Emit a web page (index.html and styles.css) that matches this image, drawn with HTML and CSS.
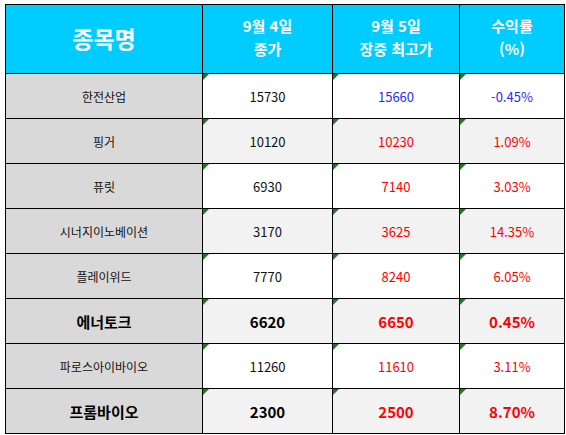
FILE: index.html
```html
<!DOCTYPE html>
<html lang="ko">
<head>
<meta charset="utf-8">
<link rel="stylesheet" href="styles.css">
</head>
<body>
<div class="sheet">
  <div class="cell head name">종목명</div>
  <div class="cell head">9월 4일<br>종가</div>
  <div class="cell head">9월 5일<br>장중 최고가</div>
  <div class="cell head">수익률<br>(%)</div>

  <div class="cell label">한전산업</div>
  <div class="cell num mark">15730</div>
  <div class="cell num mark blue">15660</div>
  <div class="cell num mark blue">-0.45%</div>

  <div class="cell label">핑거</div>
  <div class="cell num mark alt">10120</div>
  <div class="cell num mark alt red">10230</div>
  <div class="cell num mark alt red">1.09%</div>

  <div class="cell label">퓨릿</div>
  <div class="cell num mark">6930</div>
  <div class="cell num mark red">7140</div>
  <div class="cell num mark red">3.03%</div>

  <div class="cell label">시너지이노베이션</div>
  <div class="cell num mark alt">3170</div>
  <div class="cell num mark alt red">3625</div>
  <div class="cell num mark alt red">14.35%</div>

  <div class="cell label">플레이위드</div>
  <div class="cell num mark">7770</div>
  <div class="cell num mark red">8240</div>
  <div class="cell num mark red">6.05%</div>

  <div class="cell label bold">에너토크</div>
  <div class="cell num mark alt bold">6620</div>
  <div class="cell num mark alt bold red">6650</div>
  <div class="cell num mark alt bold red">0.45%</div>

  <div class="cell label">파로스아이바이오</div>
  <div class="cell num mark">11260</div>
  <div class="cell num mark red">11610</div>
  <div class="cell num mark red">3.11%</div>

  <div class="cell label bold">프롬바이오</div>
  <div class="cell num mark alt bold">2300</div>
  <div class="cell num mark alt bold red">2500</div>
  <div class="cell num mark alt bold red">8.70%</div>
</div>
</body>
</html>
```
FILE: styles.css
```css
html, body {
  margin: 0;
  padding: 0;
  background: #ffffff;
}
body {
  padding: 4px 0 0 5px;
  font-family: "Noto Sans CJK KR", "Noto Sans", sans-serif;
}
.sheet {
  display: grid;
  grid-template-columns: 197px 130px 127px 105px;
  grid-template-rows: 69px repeat(8, 45px);
  width: 559px;
  border-left: 1px solid #000;
  border-top: 1px solid #000;
}
.cell {
  position: relative;
  border-right: 1px solid #000;
  border-bottom: 1px solid #000;
  display: flex;
  align-items: center;
  justify-content: center;
  text-align: center;
  font-size: 12px;
  color: #111;
  background: #fff;
}
.num {
  font-size: 13px;
}
.head {
  background: #00ccff;
  color: #fff;
  font-weight: 700;
  font-size: 15px;
  line-height: 23px;
  padding-bottom: 4px;
}
.head.name {
  font-size: 23px;
  padding-bottom: 2px;
}
.label {
  background: #d9d9d9;
}
.alt {
  background: #f2f2f2;
}
.bold {
  font-weight: 700;
  font-size: 15px;
  color: #000;
}
.red {
  color: #ff0000;
}
.blue {
  color: #2a2aff;
}
.mark::before {
  content: "";
  position: absolute;
  left: 0;
  top: 0;
  width: 0;
  height: 0;
  border-top: 6px solid #1e7b1e;
  border-right: 6px solid transparent;
}
```
